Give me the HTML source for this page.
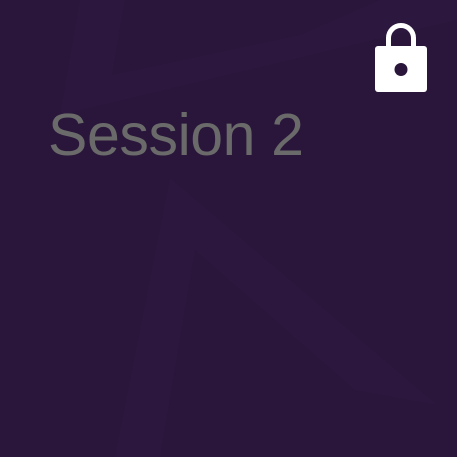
<!DOCTYPE html>
<html><head><style>
html,body{margin:0;padding:0;}
body{width:457px;height:457px;background:#29163a;position:relative;overflow:hidden;font-family:"Liberation Sans",sans-serif;}
.t{position:absolute;left:48px;top:100px;font-size:59px;color:#6a6a6a;line-height:70px;white-space:nowrap;letter-spacing:-0.4px;}
svg{position:absolute;left:0;top:0;}
</style></head><body>
<svg width="457" height="457">
<polygon points="80,0 125,0 112,75 300,35 380,0 457,0 457,20 60,115" fill="#2c183e"/>
<polygon points="170,178 437,405 355,390 195,250 160,457 115,457" fill="#2c183e"/>
<path d="M388.5 47 V38 a12.5 12.5 0 0 1 25 0 V47" fill="none" stroke="#fff" stroke-width="5"/>
<rect x="375" y="46" width="52" height="46" rx="3" fill="#fff"/>
<circle cx="401" cy="69.5" r="6.5" fill="#29163a"/>
</svg>
<div class="t">Session 2</div>
</body></html>
